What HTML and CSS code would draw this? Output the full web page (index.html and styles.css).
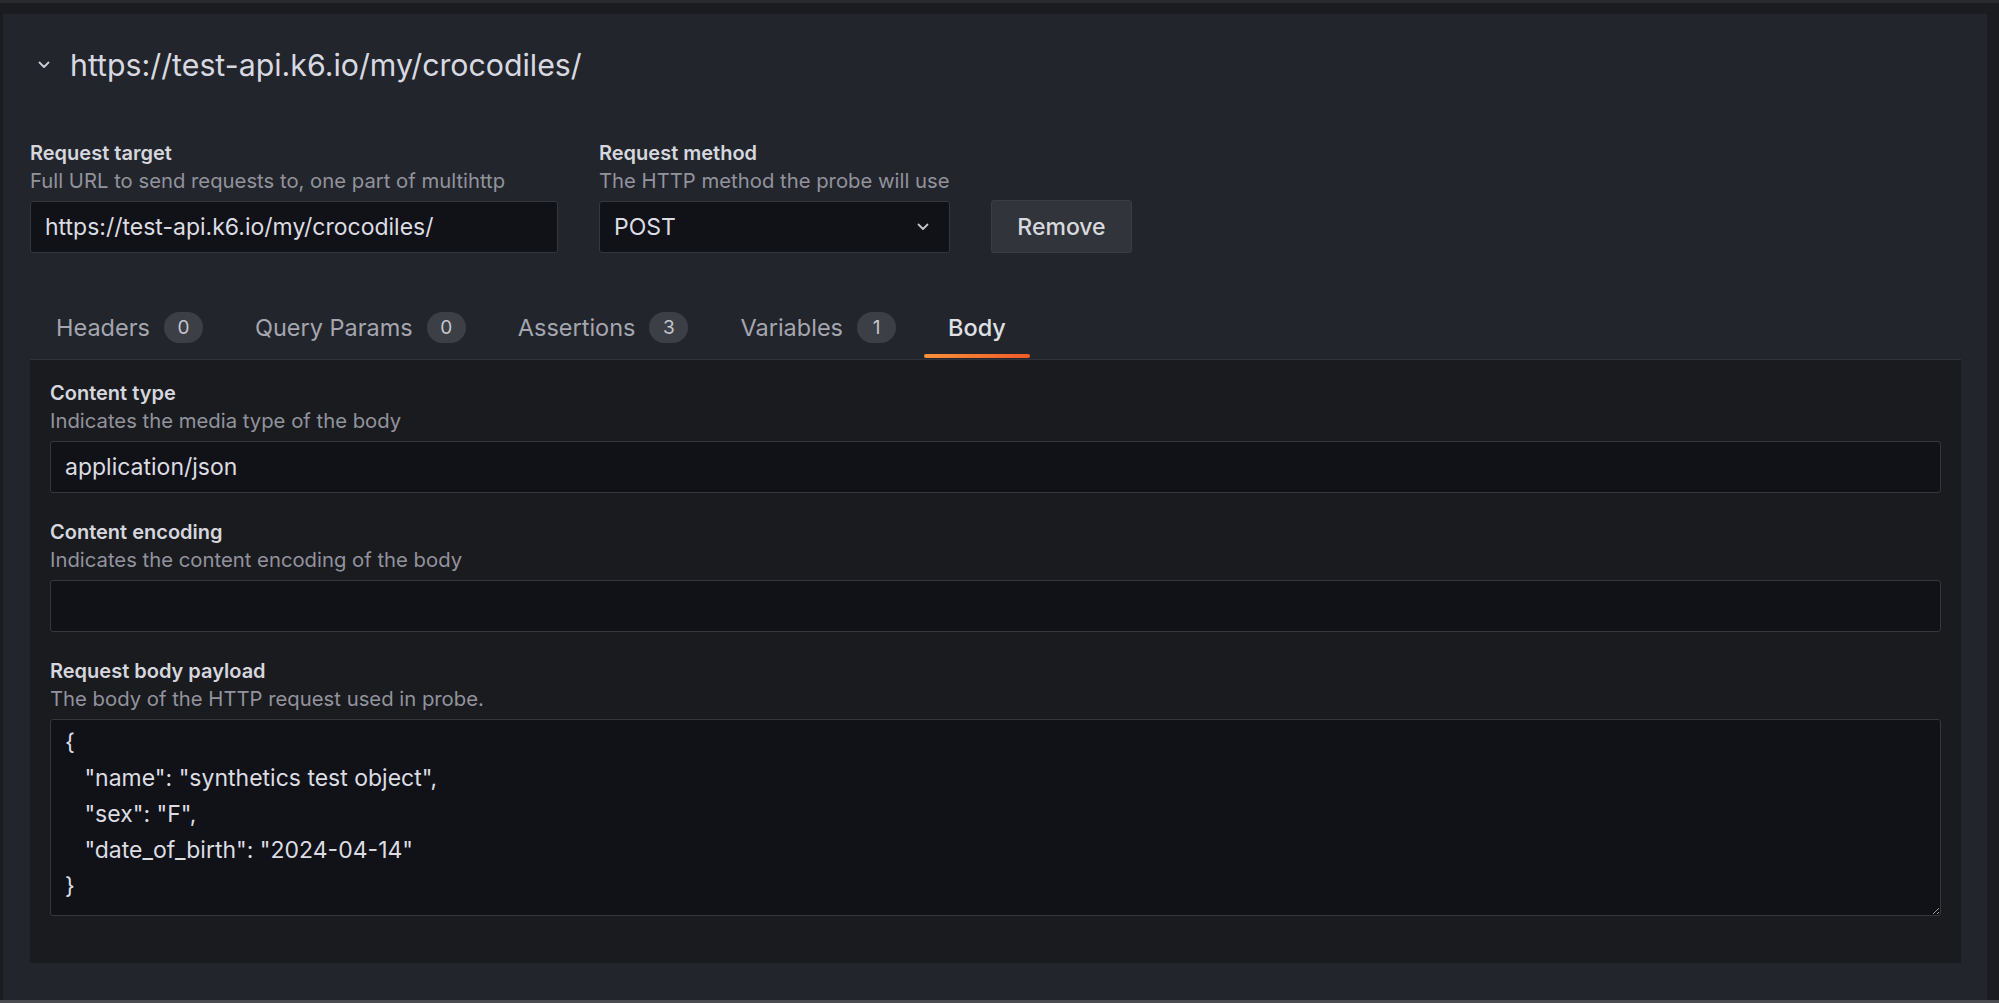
FILE: index.html
```html
<!DOCTYPE html>
<html lang="en">
<head>
<meta charset="utf-8">
<title>Request</title>
<link rel="stylesheet" href="styles.css">
</head>
<body>
<div class="page">
  <div class="topbar"></div>
  <div class="main">
    <section class="panel">
      <div class="heading">
        <svg class="heading-chevron" width="12" height="8" viewBox="0 0 12 8"><polyline points="1.5,1.5 6,6 10.5,1.5" fill="none" stroke="#ccccdc" stroke-width="1.8" stroke-linecap="round" stroke-linejoin="round"/></svg>
        <h3 class="heading-text">https://test-api.k6.io/my/crocodiles/</h3>
      </div>

      <div class="fields">
        <div class="field field-target">
          <div class="label">Request target</div>
          <div class="desc">Full URL to send requests to, one part of multihttp</div>
          <input class="input" type="text" value="https://test-api.k6.io/my/crocodiles/" readonly>
        </div>
        <div class="field field-method">
          <div class="label">Request method</div>
          <div class="desc">The HTTP method the probe will use</div>
          <div class="select">
            <span class="select-value">POST</span>
            <svg class="select-chevron" width="12" height="8" viewBox="0 0 12 8"><polyline points="1.5,1.5 6,6 10.5,1.5" fill="none" stroke="#c4c5cc" stroke-width="1.8" stroke-linecap="round" stroke-linejoin="round"/></svg>
          </div>
        </div>
        <button class="btn" type="button">Remove</button>
      </div>

      <div class="tabs">
        <div class="tab"><span>Headers</span><span class="badge">0</span></div>
        <div class="tab"><span>Query Params</span><span class="badge">0</span></div>
        <div class="tab"><span>Assertions</span><span class="badge">3</span></div>
        <div class="tab"><span>Variables</span><span class="badge">1</span></div>
        <div class="tab tab-active"><span>Body</span></div>
      </div>

      <div class="tab-content">
        <div class="field field-block">
          <div class="label">Content type</div>
          <div class="desc">Indicates the media type of the body</div>
          <input class="input" type="text" value="application/json" readonly>
        </div>
        <div class="field field-block">
          <div class="label">Content encoding</div>
          <div class="desc">Indicates the content encoding of the body</div>
          <input class="input" type="text" value="" readonly>
        </div>
        <div class="field field-block field-last">
          <div class="label">Request body payload</div>
          <div class="desc">The body of the HTTP request used in probe.</div>
          <textarea class="textarea" readonly>{
   "name": "synthetics test object",
   "sex": "F",
   "date_of_birth": "2024-04-14"
}</textarea>
        </div>
      </div>
    </section>
  </div>
  <div class="bottomline"></div>
</div>
</body>
</html>
```

FILE: styles.css
```css
* { box-sizing: border-box; }

html, body {
  margin: 0;
  padding: 0;
  background: #1b1c20;
  color-scheme: dark;
}

body {
  font-family: Inter, "Noto Sans", "Liberation Sans", sans-serif;
  color: #ccccdc;
}

.page {
  width: 1999px;
  height: 1003px;
  display: flex;
  flex-direction: column;
  overflow: hidden;
}

.topbar {
  height: 14px;
  border-top: 3px solid #2a2b30;
  background: #1b1c20;
}

.main {
  flex: 1;
  display: flex;
  padding: 0 12px 0 3px;
  min-height: 0;
}

.panel {
  flex: 1;
  background: #22252b;
  padding: 33px 26px 38px 27px;
}

.bottomline {
  height: 3px;
  background: #4a4b51;
}

/* heading */
.heading {
  display: flex;
  align-items: center;
  height: 36px;
  gap: 20px;
  padding-left: 8px;
}

.heading-chevron { display: block; }

.heading-text {
  margin: 0;
  font-size: 30.3px;
  font-weight: 400;
  line-height: 36px;
  color: #d8d9e0;
}

/* fields */
.fields {
  display: flex;
  align-items: flex-end;
  gap: 41px;
  margin-top: 57px;
}

.field { display: flex; flex-direction: column; }

.field-target { width: 528px; }
.field-method { width: 351px; }

.label {
  font-size: 20px;
  font-weight: 600;
  line-height: 27px;
  color: #d6d7de;
}

.desc {
  font-size: 20.3px;
  font-weight: 400;
  line-height: 28px;
  color: #92939d;
  margin-bottom: 6px;
}

.input {
  display: block;
  width: 100%;
  height: 52px;
  background: #111217;
  border: 1px solid #35373e;
  border-radius: 3px;
  padding: 0 14px;
  font-family: inherit;
  font-size: 23px;
  color: #dcdde3;
  outline: none;
}

.select {
  height: 52px;
  background: #111217;
  border: 1px solid #35373e;
  border-radius: 3px;
  padding: 0 20px 0 14px;
  display: flex;
  align-items: center;
  justify-content: space-between;
  font-size: 23px;
  color: #dcdde3;
}

.select-chevron { display: block; }

.btn {
  width: 141px;
  height: 53px;
  margin-bottom: 0;
  background: #32343b;
  border: 1px solid #3b3d44;
  border-radius: 3px;
  font-family: inherit;
  font-size: 23px;
  font-weight: 500;
  color: #d8d9de;
  padding: 0;
}

/* tabs */
.tabs {
  display: flex;
  gap: 4px;
  margin-top: 43px;
  padding-left: 2px;
  border-bottom: 1px solid #303238;
}

.tab {
  position: relative;
  height: 63px;
  display: flex;
  align-items: center;
  gap: 14px;
  padding: 0 24px;
  font-size: 23.5px;
  color: #a5a6af;
}

.tab-active { color: #dfe0e6; font-weight: 500; }

.tab-active::after {
  content: "";
  position: absolute;
  left: 0;
  right: 0;
  bottom: 1px;
  height: 4px;
  border-radius: 2px;
  background: linear-gradient(90deg, #f7923a, #f05a28);
}

.badge {
  width: 39px;
  height: 31px;
  border-radius: 16px;
  background: #3d3f46;
  color: #c4c6cc;
  font-size: 19px;
  display: flex;
  align-items: center;
  justify-content: center;
}

/* tab content */
.tab-content {
  background: #1a1b1f;
  padding: 20px 20px 47px;
}

.field-block { margin-bottom: 26px; }
.field-last { margin-bottom: 0; }

.textarea {
  display: block;
  width: 100%;
  height: 197px;
  background: #111217;
  border: 1px solid #35373e;
  border-radius: 3px;
  padding: 4px 14px;
  font-family: inherit;
  font-size: 23px;
  line-height: 36px;
  color: #dcdde3;
  resize: vertical;
  outline: none;
}
```
